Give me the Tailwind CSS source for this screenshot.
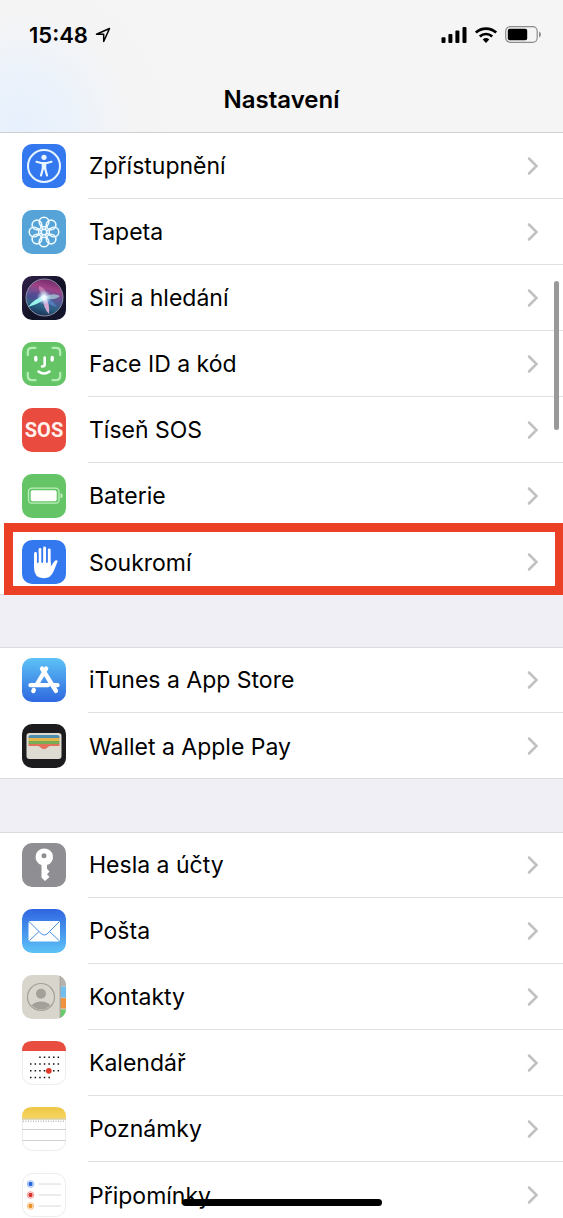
<!DOCTYPE html>
<html lang="cs">
<head>
    <meta charset="UTF-8">
    <meta name="viewport" content="width=device-width, initial-scale=1.0">
    <title>Nastavení</title>
    <script src="https://cdn.jsdelivr.net/npm/@tailwindcss/browser@4"></script>
</head>
<body class="relative flex h-screen flex-col overflow-hidden bg-[#f0eff5] font-['Inter',sans-serif] text-black">
    <!-- Shared chevron -->
    <svg class="hidden">
        <symbol id="chevron" viewBox="0 0 13 20">
            <path d="M3 2.500l7.500 7.500L3 17.500" fill="none" stroke="#c1c1c3" stroke-width="2.500" stroke-linecap="round" stroke-linejoin="miter"/>
        </symbol>
    </svg>

    <header class="flex h-[133px] shrink-0 flex-col border-b border-[#cfcfd1] bg-[#f5f5f5] bg-[radial-gradient(circle_at_20px_125px,#e7f0fd_0px,#ebf2fb_45px,#f4f4f5_110px,transparent_150px)]">
        <!-- Status bar -->
        <div class="flex h-[69px] items-center justify-between pr-[22px] pl-[29px]">
            <div class="flex items-center gap-[7px]">
                <span class="text-[22px] font-semibold leading-6">15:48</span>
                <svg class="size-4" viewBox="0 0 16 16" fill="none" stroke="#000" stroke-width="1.500" stroke-linejoin="round">
                    <path d="M14.500 1.500L1.500 7.300H8.700V14.500Z"/>
                </svg>
            </div>
            <div class="flex items-center gap-2">
                <svg class="h-4 w-[26px]" viewBox="0 0 26 16">
                    <rect x=".5" y="10.200" width="4" height="5.800" rx="1"/>
                    <rect x="7.400" y="7" width="4" height="9" rx="1"/>
                    <rect x="14.400" y="3.500" width="4" height="12.500" rx="1"/>
                    <rect x="21.500" y="0" width="4" height="16" rx="1"/>
                </svg>
                <svg class="h-4 w-[22px]" viewBox="0 0 22 16" fill="none" stroke="#000" stroke-width="2.700">
                    <path d="M.9 5.600A14.600 14.600 0 0 1 21.100 5.600"/>
                    <path d="M4.800 9.500A9 9 0 0 1 17.200 9.500"/>
                    <path d="M7.700 12.500Q11 9.700 14.300 12.500L11 15.900Z" fill="#000" stroke="none"/>
                </svg>
                <svg class="h-[17px] w-9" viewBox="0 0 36 17">
                    <rect x=".7" y=".7" width="31.500" height="15.600" rx="4.500" fill="none" stroke="#8c8c8c" stroke-width="1.200"/>
                    <rect x="2.800" y="2.800" width="19.400" height="11.400" rx="2"/>
                    <path d="M34 5.500Q36 6.300 36 8.500Q36 10.700 34 11.500Z" fill="#8c8c8c"/>
                </svg>
            </div>
        </div>
        <h1 class="pt-4 text-center text-2xl font-semibold leading-[30px]">Nastavení</h1>
    </header>

    <main class="min-h-0 flex-1 overflow-hidden text-[23px]">
        <ul class="bg-white shadow-[inset_0_-1px_0_#dcdce0]">
            <li>
                <a href="#" class="flex h-[66px] items-center gap-[22px] pl-[22px]">
                    <svg class="size-11 shrink-0" viewBox="0 0 44 44">
                        <rect width="44" height="44" rx="10" fill="#3478f0"/>
                        <circle cx="22" cy="22" r="16" fill="none" stroke="#eaf6ff" stroke-width="2"/>
                        <circle cx="22" cy="13.300" r="2.600" fill="#eaf6ff"/>
                        <path d="M14.500 17.800L20 19.200H24L29.500 17.800M21 19V24L19 31.500M23 19V24L25 31.500" fill="none" stroke="#eaf6ff" stroke-width="2.200" stroke-linecap="round"/>
                        <path d="M19.800 18.500h4.400v7h-4.400z" fill="#eaf6ff"/>
                    </svg>
                    <div class="flex h-full flex-1 items-center justify-between border-b border-[#e0e0e2] pr-6 pl-px"><span class="pt-[2px]">Zpřístupnění</span><svg class="h-5 w-[13px]"><use href="#chevron"/></svg></div>
                </a>
            </li>
            <li>
                <a href="#" class="flex h-[66px] items-center gap-[22px] pl-[22px]">
                    <svg class="size-11 shrink-0" viewBox="0 0 44 44">
                        <rect width="44" height="44" rx="10" fill="#55a3d7"/>
                        <g fill="none" stroke="#eefaff" stroke-width="1.600">
                            <circle cx="22" cy="12" r="4.800"/>
                            <circle cx="29.100" cy="14.900" r="4.800"/>
                            <circle cx="32" cy="22" r="4.800"/>
                            <circle cx="29.100" cy="29.100" r="4.800"/>
                            <circle cx="22" cy="32" r="4.800"/>
                            <circle cx="14.900" cy="29.100" r="4.800"/>
                            <circle cx="12" cy="22" r="4.800"/>
                            <circle cx="14.900" cy="14.900" r="4.800"/>
                            <circle cx="22" cy="22" r="2.800"/>
                            <path d="M20.900 19.400L18.300 15M23.100 19.400L25.700 15M24.600 20.900L29 18.300M24.600 23.100L29 25.700M23.100 24.600L25.700 29M20.900 24.600L18.300 29M19.400 23.100L15 25.700M19.400 20.900L15 18.300"/>
                        </g>
                    </svg>
                    <div class="flex h-full flex-1 items-center justify-between border-b border-[#e0e0e2] pr-6 pl-px"><span class="pt-[2px]">Tapeta</span><svg class="h-5 w-[13px]"><use href="#chevron"/></svg></div>
                </a>
            </li>
            <li>
                <a href="#" class="flex h-[66px] items-center gap-[22px] pl-[22px]">
                    <svg class="size-11 shrink-0" viewBox="0 0 44 44">
                        <defs>
                            <linearGradient id="siri-back" x2="1" y2="1"><stop stop-color="#32204a"/><stop offset=".55" stop-color="#111225"/><stop offset="1" stop-color="#14162f"/></linearGradient>
                            <linearGradient id="siri-orb" x1=".65" x2=".4" y2="1"><stop stop-color="#6d2a68"/><stop offset=".25" stop-color="#a04288"/><stop offset=".5" stop-color="#5c5796"/><stop offset=".75" stop-color="#2a6385"/><stop offset="1" stop-color="#1b2f55"/></linearGradient>
                            <radialGradient id="siri-glow"><stop stop-color="#fff"/><stop offset=".35" stop-color="#e6f8ff" stop-opacity=".85"/><stop offset="1" stop-color="#9fdcff" stop-opacity="0"/></radialGradient>
                        </defs>
                        <rect width="44" height="44" rx="10" fill="url(#siri-back)"/>
                        <circle cx="22.500" cy="21.500" r="18.500" fill="url(#siri-orb)" stroke="#8a8fa6" stroke-width="1"/>
                        <path d="M22 21C16 14 9 15 5 20Q7 27 22 21" fill="#4b3a90" opacity=".4"/>
                        <path d="M24 21Q26 13 17 10Q16 15 22 21" fill="#e9a3cc" opacity=".5"/>
                        <path d="M22 21Q31 16 38 20Q33 25 22 22" fill="#a5cfdb" opacity=".75"/>
                        <path d="M23 19Q12 23 6 31Q16 28 24 23" fill="#9af4ee"/>
                        <path d="M22 21Q30 23 35 31Q26 30 22 22" fill="#5b8fd8" opacity=".6"/>
                        <path d="M21 21Q21 32 27 38Q28 29 24 21" fill="#e8b0dc" opacity=".9"/>
                        <circle cx="22" cy="21.500" r="7.500" fill="url(#siri-glow)"/>
                    </svg>
                    <div class="flex h-full flex-1 items-center justify-between border-b border-[#e0e0e2] pr-6 pl-px"><span class="pt-[2px]">Siri a hledání</span><svg class="h-5 w-[13px]"><use href="#chevron"/></svg></div>
                </a>
            </li>
            <li>
                <a href="#" class="flex h-[66px] items-center gap-[22px] pl-[22px]">
                    <svg class="size-11 shrink-0" viewBox="0 0 44 44" fill="none" stroke-linecap="round">
                        <rect width="44" height="44" rx="10" fill="#65c466"/>
                        <path d="M5.800 13V10Q5.800 5.800 10 5.800H13.500M30.500 5.800H34Q38.200 5.800 38.200 10V13M38.200 31V34Q38.200 38.200 34 38.200H30.500M13.500 38.200H10Q5.800 38.200 5.800 34V31" stroke="#b4edb3" stroke-width="2.300"/>
                        <path d="M13.800 15.500V18M30.200 15.500V18" stroke="#fff" stroke-width="3.300"/>
                        <path d="M22.700 15.500V22.500Q22.700 24.500 20 24.500M16.500 29.500Q22 33.500 27.500 29.500" stroke="#fff" stroke-width="2.600"/>
                    </svg>
                    <div class="flex h-full flex-1 items-center justify-between border-b border-[#e0e0e2] pr-6 pl-px"><span class="pt-[2px]">Face ID a kód</span><svg class="h-5 w-[13px]"><use href="#chevron"/></svg></div>
                </a>
            </li>
            <li>
                <a href="#" class="flex h-[66px] items-center gap-[22px] pl-[22px]">
                    <span class="flex size-11 shrink-0 items-center justify-center rounded-[10px] bg-[#e94b3e] font-['Roboto',sans-serif] text-xl font-bold text-[#fff1ee]">SOS</span>
                    <div class="flex h-full flex-1 items-center justify-between border-b border-[#e0e0e2] pr-6 pl-px"><span class="pt-[2px]">Tíseň SOS</span><svg class="h-5 w-[13px]"><use href="#chevron"/></svg></div>
                </a>
            </li>
            <li>
                <a href="#" class="flex h-[66px] items-center gap-[22px] pl-[22px]">
                    <svg class="size-11 shrink-0" viewBox="0 0 44 44">
                        <rect width="44" height="44" rx="10" fill="#65c466"/>
                        <rect x="6.500" y="14.200" width="30.500" height="15" rx="3.500" fill="none" stroke="#bdf0bc" stroke-width="1.300"/>
                        <rect x="8.700" y="16.200" width="26" height="11" rx="1.800" fill="#fff"/>
                        <path d="M38.500 19Q40.700 19.600 40.700 21.700Q40.700 23.800 38.500 24.400Z" fill="#bdf0bc"/>
                    </svg>
                    <div class="flex h-full flex-1 items-center justify-between border-b border-[#e0e0e2] pr-6 pl-px"><span class="pt-[2px]">Baterie</span><svg class="h-5 w-[13px]"><use href="#chevron"/></svg></div>
                </a>
            </li>
            <!-- Highlighted row -->
            <li class="relative">
                <a href="#" class="flex h-[66px] items-center gap-[22px] pl-[22px]">
                    <svg class="size-11 shrink-0" viewBox="0 0 44 44">
                        <rect width="44" height="44" rx="10" fill="#3478f0"/>
                        <g fill="none" stroke="#fff" stroke-width="2.900" stroke-linecap="round">
                            <path d="M13.500 13.500V26M18 9.500V25M22.600 8V25M27.200 10V26"/>
                        </g>
                        <path d="M12.050 22H28.650V26.500L32.300 21.500Q34 19.500 35.800 21L31.500 31.500Q28.800 38.200 21.800 38.200Q12.050 38.200 12.050 28Z" fill="#fff"/>
                        <path d="M15.750 13V23M20.300 10V23M24.900 10V23" stroke="#3478f0" stroke-width="1.300"/>
                    </svg>
                    <div class="flex h-full flex-1 items-center justify-between pr-6 pl-px"><span class="pt-[2px]">Soukromí</span><svg class="h-5 w-[13px]"><use href="#chevron"/></svg></div>
                </a>
                <div class="pointer-events-none absolute -top-[6px] right-0 bottom-0 left-1 border-[9px] border-r-8 border-[#eb4026]"></div>
            </li>
        </ul>

        <ul class="mt-[52px] bg-white shadow-[inset_0_1px_0_#dcdce0,inset_0_-1px_0_#dcdce0]">
            <li>
                <a href="#" class="flex h-[66px] items-center gap-[22px] pl-[22px]">
                    <svg class="size-11 shrink-0" viewBox="0 0 44 44">
                        <defs><linearGradient id="store" x2="0" y2="1"><stop stop-color="#5dc2f6"/><stop offset="1" stop-color="#2f68e0"/></linearGradient></defs>
                        <rect width="44" height="44" rx="10" fill="url(#store)"/>
                        <g fill="none" stroke="#fff" stroke-width="4.300" stroke-linecap="round">
                            <path d="M24.200 10.500L14.500 27M20 10.500L34 33M8.500 27.200H26M31.500 27.200H35.500M11.800 32L11.300 33"/>
                        </g>
                    </svg>
                    <div class="flex h-full flex-1 items-center justify-between border-b border-[#e0e0e2] pr-6 pl-px"><span class="pt-[2px]">iTunes a App Store</span><svg class="h-5 w-[13px]"><use href="#chevron"/></svg></div>
                </a>
            </li>
            <li>
                <a href="#" class="flex h-[66px] items-center gap-[22px] pl-[22px]">
                    <svg class="size-11 shrink-0" viewBox="0 0 44 44">
                        <rect width="44" height="44" rx="10" fill="#1c1c1e"/>
                        <rect x="4.500" y="9" width="35" height="26" rx="3" fill="#dedbd2"/>
                        <path d="M6.500 13Q6.500 11 8.500 11H35.500Q37.500 11 37.500 13V14H6.500Z" fill="#4e8fab"/>
                        <path d="M6.500 14h31v3h-31z" fill="#e2b64b"/>
                        <path d="M6.500 17h31v3h-31z" fill="#79ad55"/>
                        <path d="M6.500 20H37.500V22H28Q26.500 22 25.500 23.500Q22 27 18.500 23.500Q17.500 22 16 22H6.500Z" fill="#e2725c"/>
                    </svg>
                    <div class="flex h-full flex-1 items-center justify-between pr-6 pl-px"><span class="pt-[2px]">Wallet a Apple Pay</span><svg class="h-5 w-[13px]"><use href="#chevron"/></svg></div>
                </a>
            </li>
        </ul>

        <ul class="mt-[53px] bg-white shadow-[inset_0_1px_0_#dcdce0]">
            <li>
                <a href="#" class="flex h-[66px] items-center gap-[22px] pl-[22px]">
                    <svg class="size-11 shrink-0" viewBox="0 0 44 44">
                        <rect width="44" height="44" rx="10" fill="#8e8e93"/>
                        <path fill-rule="evenodd" d="M22 5.500A8.500 8.500 0 0 0 19.500 22.100V34.500L23 38L27.500 34L25 31.200L27.500 28.500L25 25.800V22.100A8.500 8.500 0 0 0 22 5.500ZM22 10.300A2.500 2.500 0 1 1 22 15.300A2.500 2.500 0 1 1 22 10.300Z" fill="#fff"/>
                    </svg>
                    <div class="flex h-full flex-1 items-center justify-between border-b border-[#e0e0e2] pr-6 pl-px"><span class="pt-[2px]">Hesla a účty</span><svg class="h-5 w-[13px]"><use href="#chevron"/></svg></div>
                </a>
            </li>
            <li>
                <a href="#" class="flex h-[66px] items-center gap-[22px] pl-[22px]">
                    <svg class="size-11 shrink-0" viewBox="0 0 44 44">
                        <defs><linearGradient id="mail" x2="0" y2="1"><stop stop-color="#3065e2"/><stop offset="1" stop-color="#5dc3f7"/></linearGradient></defs>
                        <rect width="44" height="44" rx="10" fill="url(#mail)"/>
                        <rect x="6.500" y="12" width="31.500" height="20.500" rx="2" fill="#fff"/>
                        <path d="M7.500 13L19.500 25Q22.200 27.300 25 25L37 13M7.500 31.500L17 22.500M37 31.500L27.500 22.500" fill="none" stroke="#4a90e4" stroke-width="1"/>
                    </svg>
                    <div class="flex h-full flex-1 items-center justify-between border-b border-[#e0e0e2] pr-6 pl-px"><span class="pt-[2px]">Pošta</span><svg class="h-5 w-[13px]"><use href="#chevron"/></svg></div>
                </a>
            </li>
            <li>
                <a href="#" class="flex h-[66px] items-center gap-[22px] pl-[22px]">
                    <svg class="size-11 shrink-0" viewBox="0 0 44 44">
                        <defs>
                            <clipPath id="contacts-tile"><rect width="44" height="44" rx="10"/></clipPath>
                            <clipPath id="contacts-face"><circle cx="19" cy="22" r="12.500"/></clipPath>
                        </defs>
                        <g clip-path="url(#contacts-tile)">
                            <path d="M0 0h44v44H0z" fill="#d8d5cc"/>
                            <path d="M38 0h6v11h-6z" fill="#b5b3ac"/>
                            <path d="M38 11.500h6v11h-6z" fill="#70bdee"/>
                            <path d="M38 23h6v10.500h-6z" fill="#ee9240"/>
                            <path d="M38 34.500h6V44h-6z" fill="#67ca69"/>
                            <path d="M38.200 0V44" stroke="#a8a69f" stroke-width="1.200"/>
                        </g>
                        <circle cx="19" cy="22" r="13.500" fill="none" stroke="#a39f99" stroke-width="1.200"/>
                        <circle cx="19" cy="18.700" r="5" fill="#a39f99"/>
                        <ellipse cx="19" cy="33" rx="10.500" ry="6.500" fill="#a39f99" clip-path="url(#contacts-face)"/>
                    </svg>
                    <div class="flex h-full flex-1 items-center justify-between border-b border-[#e0e0e2] pr-6 pl-px"><span class="pt-[2px]">Kontakty</span><svg class="h-5 w-[13px]"><use href="#chevron"/></svg></div>
                </a>
            </li>
            <li>
                <a href="#" class="flex h-[66px] items-center gap-[22px] pl-[22px]">
                    <svg class="size-11 shrink-0" viewBox="0 0 44 44">
                        <rect x=".5" y=".5" width="43" height="43" rx="10" fill="#fff" stroke="#ececee"/>
                        <path d="M0 10Q0 0 10 0H34Q44 0 44 10Z" fill="#e84d3f"/>
                        <g stroke="#111" stroke-width="1.500" stroke-dasharray="1.500 3.100">
                            <path d="M17.200 16.200H38M8 23H38M8 29.800H38M8 36.600H28.500"/>
                        </g>
                        <circle cx="26.800" cy="29.800" r="2.900" fill="#e0392b"/>
                    </svg>
                    <div class="flex h-full flex-1 items-center justify-between border-b border-[#e0e0e2] pr-6 pl-px"><span class="pt-[2px]">Kalendář</span><svg class="h-5 w-[13px]"><use href="#chevron"/></svg></div>
                </a>
            </li>
            <li>
                <a href="#" class="flex h-[66px] items-center gap-[22px] pl-[22px]">
                    <svg class="size-11 shrink-0" viewBox="0 0 44 44">
                        <defs><linearGradient id="notes" x2="0" y2="1"><stop stop-color="#edc647"/><stop offset="1" stop-color="#f6d661"/></linearGradient></defs>
                        <rect x=".5" y=".5" width="43" height="43" rx="10" fill="#fff" stroke="#ececee"/>
                        <path d="M0 11.500V10Q0 0 10 0H34Q44 0 44 10V11.500Z" fill="url(#notes)"/>
                        <path d="M0 12H44" stroke="#c9b678" stroke-width="1"/>
                        <path d="M1 14.200H43" stroke="#bdbdbd" stroke-width="1.500" stroke-dasharray="1 1.500"/>
                        <path d="M0 22.500H44M0 33.500H44" stroke="#d2d2d4" stroke-width="1"/>
                    </svg>
                    <div class="flex h-full flex-1 items-center justify-between border-b border-[#e0e0e2] pr-6 pl-px"><span class="pt-[2px]">Poznámky</span><svg class="h-5 w-[13px]"><use href="#chevron"/></svg></div>
                </a>
            </li>
            <li>
                <a href="#" class="flex h-[66px] items-center gap-[22px] pl-[22px]">
                    <svg class="size-11 shrink-0" viewBox="0 0 44 44">
                        <rect x=".5" y=".5" width="43" height="43" rx="10" fill="#fff" stroke="#ececee"/>
                        <g fill="none" stroke-width=".8">
                            <circle cx="8.500" cy="11" r="3.300" stroke="#7ba7ee"/>
                            <circle cx="8.500" cy="22" r="3.300" stroke="#ee8580"/>
                            <circle cx="8.500" cy="33" r="3.300" stroke="#f2b46b"/>
                        </g>
                        <circle cx="8.500" cy="11" r="2.200" fill="#2968dc"/>
                        <circle cx="8.500" cy="22" r="2.200" fill="#dc332e"/>
                        <circle cx="8.500" cy="33" r="2.200" fill="#ec8f25"/>
                        <path d="M16.500 11H39M16.500 22H39M16.500 33H39" stroke="#d8d8dc" stroke-width="1"/>
                    </svg>
                    <div class="flex h-full flex-1 items-center justify-between pr-6 pl-px"><span class="pt-[2px]">Připomínky</span><svg class="h-5 w-[13px]"><use href="#chevron"/></svg></div>
                </a>
            </li>
        </ul>
    </main>

    <!-- Scroll indicator and home bar -->
    <div class="absolute top-[281px] right-1 h-[149px] w-[5px] rounded-full bg-[#999999]"></div>
    <div class="absolute bottom-3 left-1/2 h-[7px] w-[200px] -translate-x-1/2 rounded-full bg-black"></div>
</body>
</html>
